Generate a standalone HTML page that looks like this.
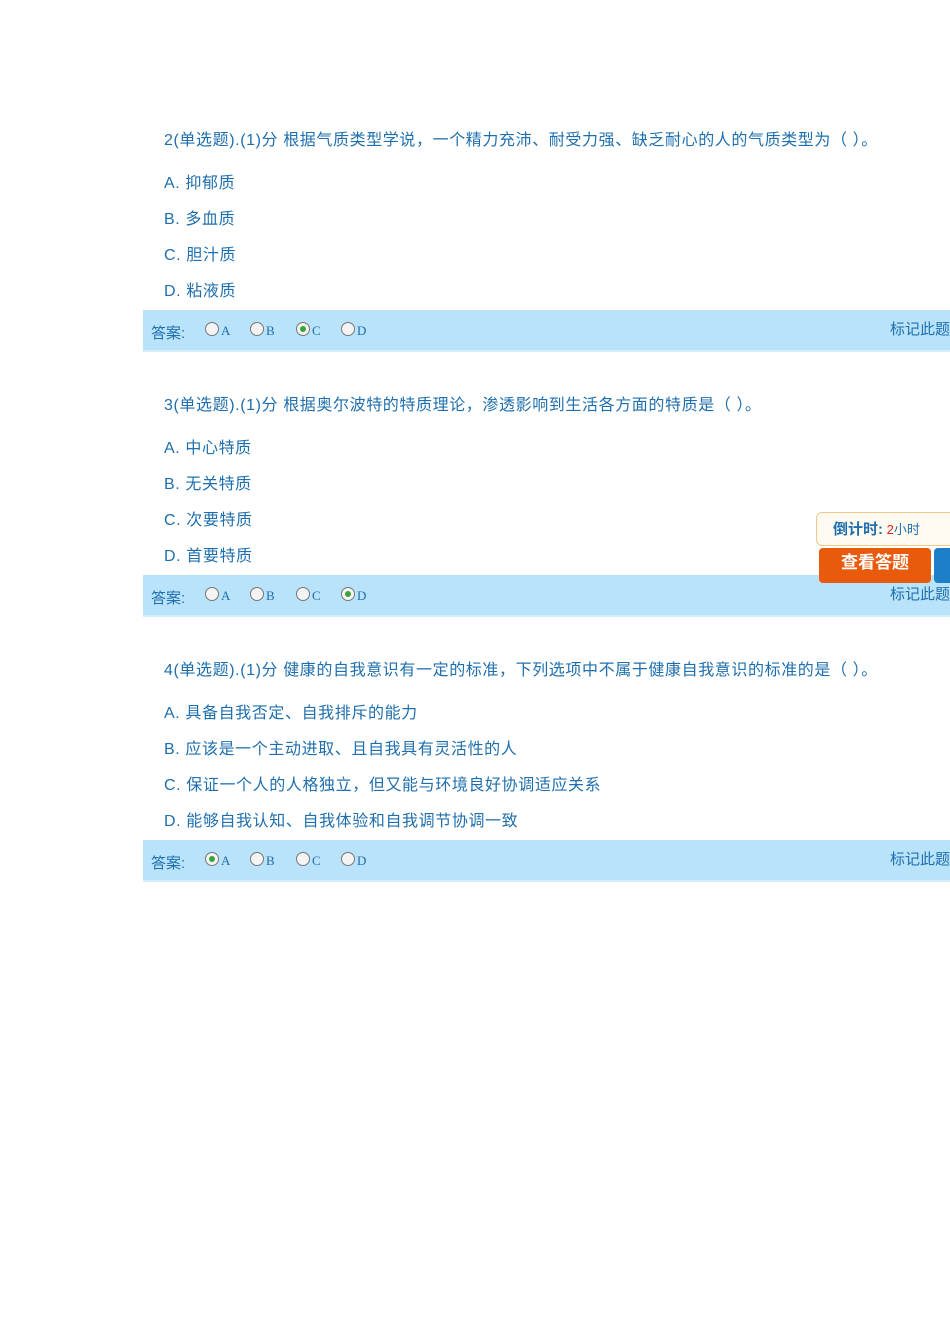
<!DOCTYPE html><html><head><meta charset="utf-8"><style>
body{margin:0;width:950px;height:1344px;background:#fff;position:relative;overflow:hidden;font-family:"Liberation Sans","Noto Sans CJK SC",sans-serif;color:#1f6fae}
.t{position:absolute;left:164px;font-size:16px;white-space:nowrap;line-height:20px;letter-spacing:0.6px}
.bar{position:absolute;left:143px;width:807px;height:40px;background:#b9e3fa;border-bottom:2px solid #d6eefb}
.bar .l{position:absolute;left:8px;top:12px;font-size:15px}
.bar .m{position:absolute;right:0;top:8px;font-size:15px}
.r{position:absolute;top:12px;font-size:13px;font-family:"Liberation Serif",serif}
.r i{display:inline-block;width:12px;height:12px;border:1px solid #777;border-radius:50%;background:#f4f4f4;vertical-align:-1px;margin-right:2px;position:relative}
.r i.on:after{content:"";position:absolute;left:3px;top:3px;width:6px;height:6px;border-radius:50%;background:#3aa33a}
</style></head><body>
<div class="t" style="top:131px">2(单选题).(1)分 根据气质类型学说，一个精力充沛、耐受力强、缺乏耐心的人的气质类型为（ ）。</div>
<div class="t" style="top:174px">A. 抑郁质</div><div class="t" style="top:210px">B. 多血质</div><div class="t" style="top:246px">C. 胆汁质</div><div class="t" style="top:282px">D. 粘液质</div>
<div class="bar" style="top:310px"><span class="l">答案:</span><span class="r" style="left:62px"><i></i>A</span><span class="r" style="left:107px"><i></i>B</span><span class="r" style="left:153px"><i class="on"></i>C</span><span class="r" style="left:198px"><i></i>D</span><span class="m">标记此题</span></div>

<div class="t" style="top:396px">3(单选题).(1)分 根据奥尔波特的特质理论，渗透影响到生活各方面的特质是（ ）。</div>
<div class="t" style="top:439px">A. 中心特质</div><div class="t" style="top:475px">B. 无关特质</div><div class="t" style="top:511px">C. 次要特质</div><div class="t" style="top:547px">D. 首要特质</div>
<div class="bar" style="top:575px"><span class="l">答案:</span><span class="r" style="left:62px"><i></i>A</span><span class="r" style="left:107px"><i></i>B</span><span class="r" style="left:153px"><i></i>C</span><span class="r" style="left:198px"><i class="on"></i>D</span><span class="m">标记此题</span></div>

<div class="t" style="top:661px">4(单选题).(1)分 健康的自我意识有一定的标准，下列选项中不属于健康自我意识的标准的是（ ）。</div>
<div class="t" style="top:704px">A. 具备自我否定、自我排斥的能力</div><div class="t" style="top:740px">B. 应该是一个主动进取、且自我具有灵活性的人</div><div class="t" style="top:776px">C. 保证一个人的人格独立，但又能与环境良好协调适应关系</div><div class="t" style="top:812px">D. 能够自我认知、自我体验和自我调节协调一致</div>
<div class="bar" style="top:840px"><span class="l">答案:</span><span class="r" style="left:62px"><i class="on"></i>A</span><span class="r" style="left:107px"><i></i>B</span><span class="r" style="left:153px"><i></i>C</span><span class="r" style="left:198px"><i></i>D</span><span class="m">标记此题</span></div>

<div style="position:absolute;left:816px;top:512px;width:150px;height:34px;background:#fffaf0;border:1px solid #f0c890;border-radius:6px;font-size:15px;font-weight:bold;line-height:34px;padding-left:16px;box-sizing:border-box">倒计时:<span style="color:#d22;font-weight:normal;font-size:13px"> 2</span><span style="font-weight:normal;font-size:13px">小时</span></div>
<div style="position:absolute;left:819px;top:548px;width:112px;height:35px;background:#e85a0c;border-radius:4px;color:#fff;font-size:17px;font-weight:bold;text-align:center;line-height:30px">查看答题</div>
<div style="position:absolute;left:934px;top:548px;width:20px;height:35px;background:#1d7fc8;border-radius:4px"></div>
</body></html>
